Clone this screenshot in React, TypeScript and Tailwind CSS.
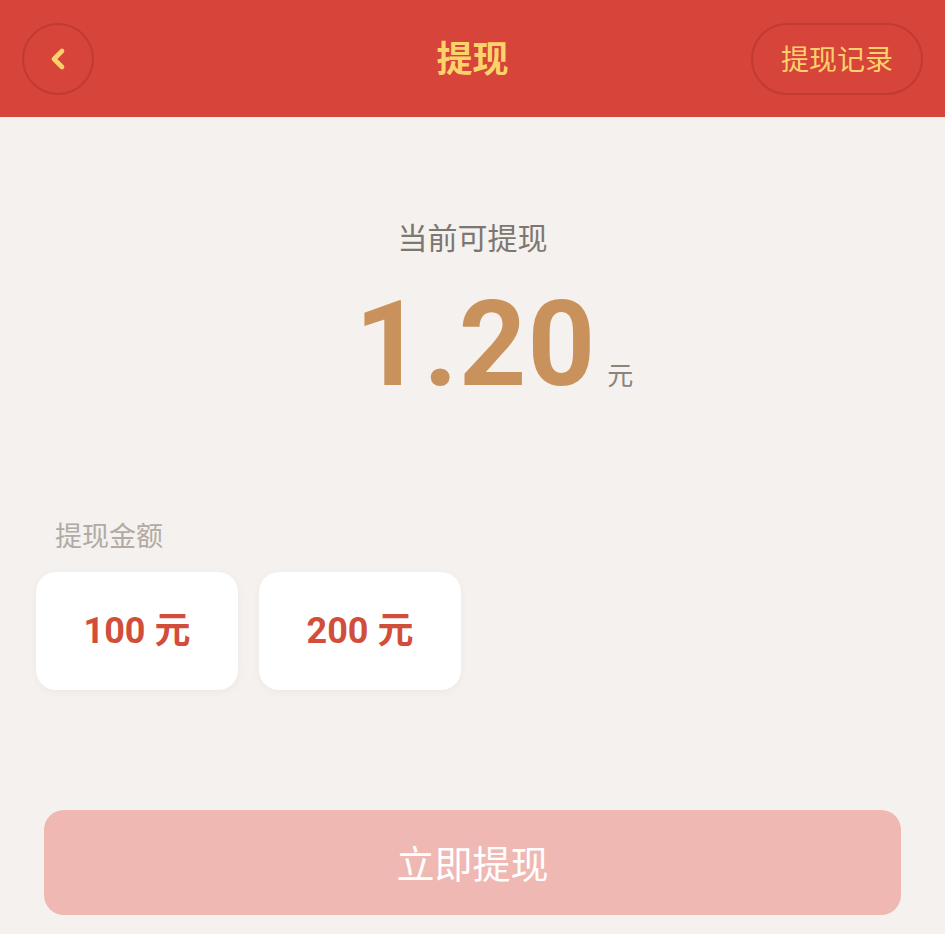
import { ChevronLeft } from 'lucide-react';

const amounts = ['100', '200'];

export default function App() {
  return (
    <div
      className="w-[945px] h-[934px] bg-[#f4f1ee] overflow-hidden"
      style={{ fontFamily: '"Noto Sans", "Noto Sans CJK SC", sans-serif' }}
    >
      {/* header */}
      <div className="h-[117px] bg-[#d6443a] grid grid-cols-[1fr_auto_1fr] items-center px-[22px]">
        <div>
          <button className="w-[72px] h-[72px] rounded-full border-2 border-[#c23a30] flex items-center justify-center text-[#fcd06a]">
            <ChevronLeft className="w-8 h-8" strokeWidth={3.5} />
          </button>
        </div>
        <h1 className="text-[36px] font-bold text-[#fcd36a] leading-none">提现</h1>
        <div className="flex justify-end">
          <button className="w-[172px] h-[72px] rounded-full border-2 border-[#c23a30] text-[28px] text-[#fcd06a] leading-none flex items-center justify-center">
            提现记录
          </button>
        </div>
      </div>

      {/* balance */}
      <div className="flex flex-col items-center pt-[106px]">
        <p className="text-[30px] text-[#7d7771] leading-none">当前可提现</p>
        <div className="flex items-end mt-[42px] pl-[43px]">
          <span
            className="text-[118px] font-bold text-[#c9925c] leading-[100px] tracking-[1px]"
            style={{ fontFamily: 'Roboto, "Noto Sans", sans-serif' }}
          >
            1.20
          </span>
          <span className="text-[26px] text-[#8a837d] ml-[11px] mb-[7px] leading-none">元</span>
        </div>
      </div>

      {/* amount options */}
      <div className="px-[36px] pt-[127px]">
        <p className="text-[27px] text-[#b2aaa4] leading-none pl-[19px]">提现金额</p>
        <div className="flex gap-[21px] mt-[23px]">
          {amounts.map((a) => (
            <div
              key={a}
              className="w-[202px] h-[118px] bg-white rounded-[20px] shadow-[0_2px_10px_rgba(0,0,0,0.04)] flex items-center justify-center text-[36px] font-bold text-[#d24e3a]"
              style={{ fontFamily: 'Roboto, "Noto Sans CJK SC", sans-serif' }}
            >
              {a} 元
            </div>
          ))}
        </div>
      </div>

      {/* submit */}
      <div className="px-[44px] pt-[120px]">
        <button className="w-full h-[105px] rounded-[20px] bg-[#efb8b2] text-white text-[38px] leading-none flex items-center justify-center">
          立即提现
        </button>
      </div>
    </div>
  );
}
